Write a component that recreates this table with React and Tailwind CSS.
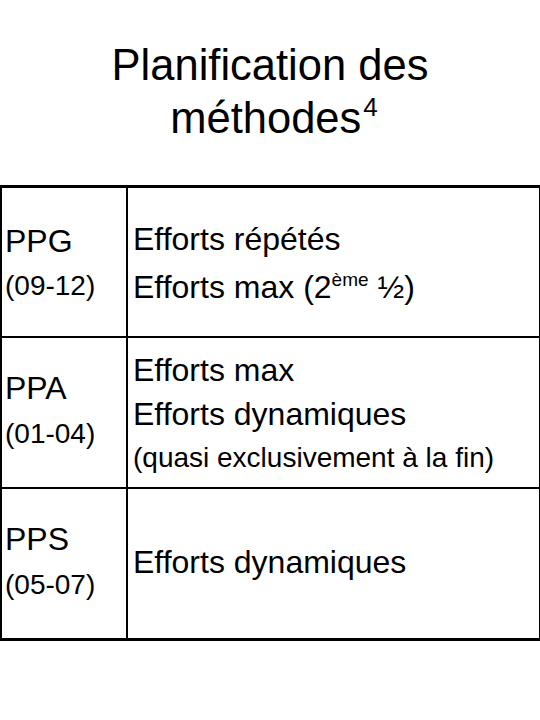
export default function App() {
  const font = { fontFamily: '"Liberation Sans", Arial, sans-serif' };
  return (
    <div className="w-[540px] h-[720px] bg-white text-black overflow-hidden" style={font}>
      {/* Title */}
      <div className="h-[185px] pt-[39px] text-center text-[43.5px] leading-[53px]">
        <div>Planification des</div>
        <div className="pl-[8px]">
          méthodes<span className="relative top-[-17px] text-[26px] ml-[2px]">4</span>
        </div>
      </div>

      {/* Table */}
      <div className="grid grid-cols-[126px_1fr] border-t-[3px] border-b-[3px] border-l-2 border-r border-black">
        {/* Row 1 */}
        <div className="h-[148px] border-r-2 border-black flex flex-col pl-[3px] pt-[30px]">
          <div className="text-[32px] leading-[46px]">PPG</div>
          <div className="text-[28px] leading-[44px]">(09-12)</div>
        </div>
        <div className="h-[148px] flex flex-col justify-center pl-[5px] pt-[6px]">
          <div className="text-[32px] leading-[48px]">Efforts répétés</div>
          <div className="text-[32px] leading-[48px]">
            Efforts max (2<span className="relative top-[-12px] text-[19px]">ème</span> ½)
          </div>
        </div>

        {/* Row 2 */}
        <div className="h-[151px] border-t-2 border-r-2 border-black flex flex-col pl-[3px] pt-[26px]">
          <div className="text-[32px] leading-[48px]">PPA</div>
          <div className="text-[28px] leading-[44px]">(01-04)</div>
        </div>
        <div className="h-[151px] border-t-2 border-black flex flex-col justify-center pl-[5px] pt-[2px]">
          <div className="text-[32px] leading-[44px]">Efforts max</div>
          <div className="text-[32px] leading-[44px]">Efforts dynamiques</div>
          <div className="text-[28px] leading-[44px]">(quasi exclusivement à la fin)</div>
        </div>

        {/* Row 3 */}
        <div className="h-[151px] border-t-2 border-r-2 border-black flex flex-col pl-[3px] pt-[26px]">
          <div className="text-[32px] leading-[48px]">PPS</div>
          <div className="text-[28px] leading-[44px]">(05-07)</div>
        </div>
        <div className="h-[151px] border-t-2 border-black flex flex-col justify-center pl-[5px] pb-[4px]">
          <div className="text-[32px] leading-[44px]">Efforts dynamiques</div>
        </div>
      </div>
    </div>
  );
}
